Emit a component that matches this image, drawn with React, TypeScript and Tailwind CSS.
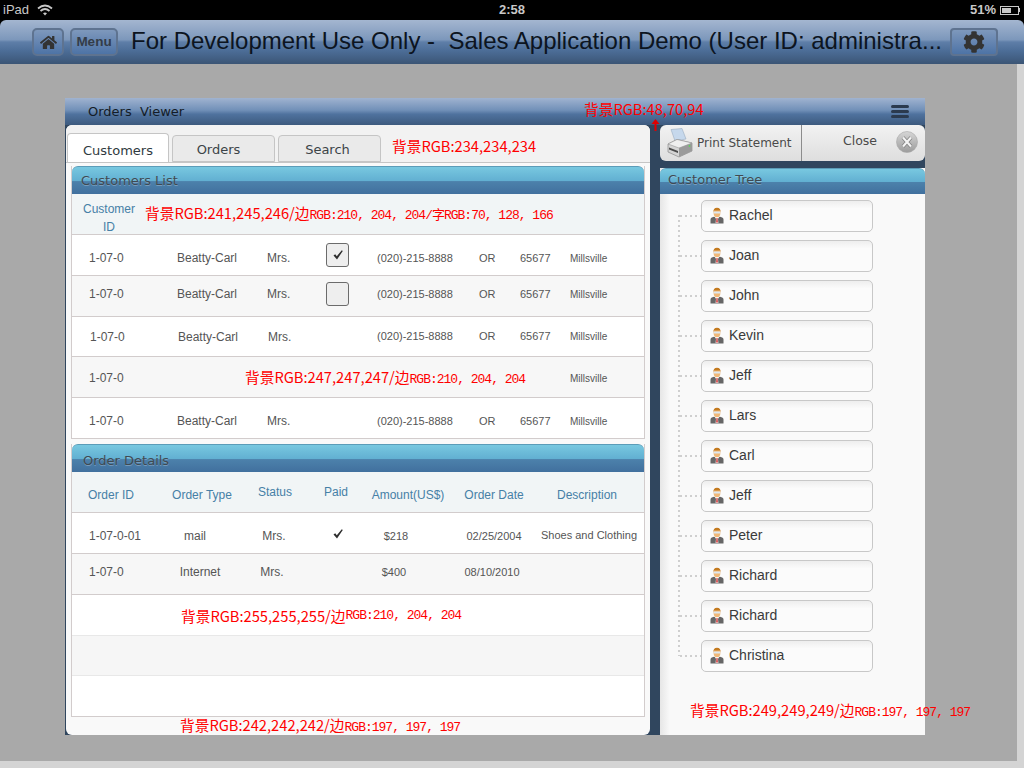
import { FC, ReactNode } from 'react';
import { FaCog, FaHome } from 'react-icons/fa';

const SANS = 'font-["Liberation_Sans",Arial,sans-serif]';
const UI = 'font-["DejaVu_Sans","Noto_Sans",sans-serif]';
const NOTE = 'font-["Noto_Sans_CJK_SC","Noto_Sans",sans-serif] text-[14.7px] leading-[18px] text-[#f00] whitespace-nowrap';
const NOTE_MONO = 'font-["Liberation_Mono","Noto_Sans_CJK_SC",monospace] text-[13px] tracking-[-1px]';

const treeNames = ['Rachel', 'Joan', 'John', 'Kevin', 'Jeff', 'Lars', 'Carl', 'Jeff', 'Peter', 'Richard', 'Richard', 'Christina'];

const customerGrid = 'grid grid-cols-[88px_90px_59px_51px_102px_41px_50px_1fr] items-center';
const customerGridNudged = 'grid grid-cols-[88px_90px_58px_51px_102px_41px_50px_1fr] items-center';
const orderGrid = 'grid grid-cols-[61px_90px_68px_60px_56px_140px_50px] items-center';
const orderHeadGrid = 'grid grid-cols-[62px_104px_42px_80px_64px_108px_78px] items-center';

const Check: FC<{ className?: string }> = ({ className }) => (
	<svg viewBox="0 0 12 12" className={className}>
		<path d="M1.5 6.6 L3.2 5.2 L4.8 7.2 L9.8 1.2 L10.8 1.9 L5 10.6 Z" fill="#2e2e2e" />
	</svg>
);

const UserIcon: FC = () => (
	<svg viewBox="0 0 14 17" className="h-[17px] w-[14px] shrink-0">
		<path d="M0.5 16.5 V12.5 Q0.5 10.5 4 9.8 L7 11 L10 9.8 Q13.5 10.5 13.5 12.5 V16.5 Z" fill="#666" />
		<path d="M5 10 H9 L8 12 L8.4 16 H5.6 L6 12 Z" fill="#fff" />
		<path d="M6.5 11 H7.5 L7.8 15.5 H6.2 Z" fill="#c81e1e" />
		<ellipse cx="7" cy="6" rx="3.4" ry="4.2" fill="#f0b878" />
		<path d="M3.4 5.5 Q3 0.8 7 0.8 Q11 0.8 10.6 5.5 L10 3.6 H4 Z" fill="#c47a1f" />
		<rect x="3.8" y="4.6" width="6.4" height="1.8" rx="0.6" fill="#dfe8ee" />
	</svg>
);

const PrinterIcon: FC = () => (
	<svg viewBox="0 0 26 30" className="h-[30px] w-[26px] shrink-0">
		<path d="M4 1.5 L15 0.5 L19 11 L8 13 Z" fill="#c6d8ec" stroke="#8fa3b8" strokeWidth="0.5" />
		<path d="M1 16 L10 11.5 L25 15 V23 L12 29 L1 24 Z" fill="#d4d4d4" stroke="#7c7c7c" strokeWidth="0.6" />
		<path d="M1 16 L12 20 L25 15 L10 11.5 Z" fill="#efefef" stroke="#8b8b8b" strokeWidth="0.5" />
		<path d="M12 20 V29 L25 23 V15 Z" fill="#9a9a9a" />
		<path d="M2 19.5 L11 23 V25 L2 21.5 Z" fill="#4b4b4b" />
		<circle cx="22.5" cy="18" r="0.9" fill="#5fd35f" />
	</svg>
);

const CloseIcon: FC = () => (
	<svg viewBox="0 0 22 22" className="ml-[19px] mb-[3px] h-[22px] w-[22px]">
		<defs>
			<linearGradient id="closeFill" x1="0" y1="0" x2="0" y2="1">
				<stop offset="0" stopColor="#d6d6d6" />
				<stop offset="1" stopColor="#9c9c9c" />
			</linearGradient>
		</defs>
		<circle cx="11" cy="11" r="10.5" fill="url(#closeFill)" stroke="#a8a8a8" strokeWidth="0.6" />
		<path d="M7 6.5 L15 15.5 M15 6.5 L7 15.5" stroke="#7f7f7f" strokeWidth="3.6" />
		<path d="M7 6.5 L15 15.5 M15 6.5 L7 15.5" stroke="#f4f4f4" strokeWidth="2.2" />
	</svg>
);

const Menu: FC = () => (
	<div className="flex flex-col gap-[2px]">
		<div className="h-[3px] w-[18px] rounded-full bg-[#2b3a4e]" />
		<div className="h-[3px] w-[18px] rounded-full bg-[#2b3a4e]" />
		<div className="h-[3px] w-[18px] rounded-full bg-[#2b3a4e]" />
	</div>
);

const SectionTitle: FC<{ title: string; className: string }> = ({ title, className }) => (
	<div className={`shrink-0 rounded-t-[6px] border-t border-[#5b9cb8] bg-[linear-gradient(#78c8e0,#62b0d2_50%,#4c81ab_54%,#41709e)] text-[13px] text-[#3f4a52] [text-shadow:0_1px_0_rgba(255,255,255,0.25)] ${UI} ${className}`}>
		{title}
	</div>
);

const Tab: FC<{ label: string; active?: boolean; className?: string }> = ({ label, active, className = '' }) => (
	<div
		className={
			active
				? `flex h-[29px] w-[102px] items-center justify-center rounded-t-[4px] border border-b-0 border-[#c5c5c5] bg-white pt-[5px] text-[13px] text-[#2f3a40] ${UI}`
				: `flex h-[27px] w-[103px] items-center justify-center rounded-t-[4px] border border-[#c5c5c5] bg-[#eaeaea] pt-[3px] text-[13px] text-[#3c4448] ${UI} ${className}`
		}
	>
		{label}
	</div>
);

const CustomerRow: FC<{ box?: 'checked' | 'empty'; nudge?: boolean; h: string; alt?: boolean }> = ({ box, nudge, h, alt }) => (
	<div className={`${nudge ? customerGridNudged : customerGrid} ${h} border-b border-[#d2cccc] ${nudge ? 'pl-[18px]' : 'pl-[17px]'} ${alt ? 'bg-[#f7f7f7]' : 'bg-white'} text-[#555] ${SANS}`}>
		<span className="text-[12px]">1-07-0</span>
		<span className="text-[12px]">Beatty-Carl</span>
		<span className="text-[12px]">Mrs.</span>
		<span>
			{box && (
				<span className={`flex h-[24px] w-[23px] items-center justify-center rounded-[3px] border border-[#6b6b6b] bg-[#eeeeee] ${box === 'checked' ? '-mt-[6px]' : ''}`}>
					{box === 'checked' && <Check className="h-[12px] w-[12px]" />}
				</span>
			)}
		</span>
		<span className="text-[11px]">(020)-215-8888</span>
		<span className="text-[11px]">OR</span>
		<span className="text-[11px]">65677</span>
		<span className="text-[10px]">Millsville</span>
	</div>
);

const Center: FC<{ className?: string; children?: ReactNode }> = ({ className = '', children }) => (
	<div className={`flex justify-center whitespace-nowrap ${className}`}>{children}</div>
);

const App: FC = () => {
	return (
		<div className="flex h-[768px] w-[1024px] flex-col overflow-hidden bg-black">
			{/* status bar */}
			<div className={`grid h-[20px] shrink-0 grid-cols-3 items-center px-[3px] text-[13px] text-[#c8c8c8] ${SANS}`}>
				<div className="flex items-center gap-[8px]">
					<span>iPad</span>
					<svg viewBox="0 0 16 12" className="h-[12px] w-[16px]">
						<path d="M1 4.5 Q8 -1.5 15 4.5" stroke="#c8c8c8" strokeWidth="1.8" fill="none" />
						<path d="M3.5 7 Q8 3 12.5 7" stroke="#c8c8c8" strokeWidth="1.8" fill="none" />
						<path d="M6 9.3 Q8 7.6 10 9.3 L8 11.5 Z" fill="#c8c8c8" />
					</svg>
				</div>
				<div className="text-center font-bold">2:58</div>
				<div className="flex items-center justify-end gap-[4px] pr-[1px]">
					<span className="font-bold">51%</span>
					<div className="flex items-center">
						<div className="h-[9px] w-[19px] border border-[#c8c8c8] p-[1px]">
							<div className="h-full w-[9px] bg-[#c8c8c8]" />
						</div>
						<div className="h-[4px] w-[1px] bg-[#c8c8c8]" />
					</div>
				</div>
			</div>
			{/* app header */}
			<div className="flex h-[44px] shrink-0 items-center rounded-t-[6px] bg-[linear-gradient(#a4b6d0,#7c97bb_45%,#5e7ea8_50%,#4c6d97_70%,#3b5575)] pl-[32px]">
				<button className="flex h-[28px] w-[32px] items-center justify-center rounded-[5px] border-2 border-[#5e7390] bg-[linear-gradient(#7e98bc,#4d73a6)]">
					<FaHome className="h-[17px] w-[17px] text-[#333]" />
				</button>
				<button className={`ml-[6px] h-[28px] w-[48px] rounded-[5px] border-2 border-[#5e7390] bg-[linear-gradient(#7e98bc,#4d73a6)] text-[13.5px] font-bold text-[#333c48] ${SANS}`}>
					Menu
				</button>
				<div className={`ml-[13px] mb-[2px] w-[819px] whitespace-pre text-[24px] leading-[30px] text-[#0c1420] ${SANS}`}>
					For Development Use Only -  Sales Application Demo (User ID: administra...
				</div>
				<button className="flex h-[28px] w-[48px] items-center justify-center rounded-[4px] border-2 border-[#5e7390] bg-[linear-gradient(#7e98bc,#4d73a6)]">
					<FaCog className="h-[22px] w-[22px] text-[#333]" />
				</button>
			</div>
			{/* page */}
			<div className="flex h-[697px] shrink-0">
				<div className="w-[1017px] bg-[#a9a9a9] pl-[65px] pt-[34px]">
					<div className="flex h-[637px] w-[860px] flex-col bg-[#30465e]">
						<div className="relative flex h-[27px] shrink-0 items-center bg-[linear-gradient(#a0b3d0,#7190b8_45%,#4f729e_60%,#3d5a7e)] pl-[23px] pr-[16px]">
							<div className={`w-[496px] whitespace-pre text-[13px] text-[#141c26] ${UI}`}>Orders  Viewer</div>
							<div className={`mb-[5px] ${NOTE}`}>背景RGB:48,70,94</div>
							<svg viewBox="0 0 9 12" className="absolute left-[586px] top-[21px] h-[12px] w-[9px]">
								<path d="M4.5 0 L8.5 5 H5.5 V12 H3.5 V5 H0.5 Z" fill="#e00000" />
							</svg>
							<div className="ml-auto">
								<Menu />
							</div>
						</div>
						<div className="flex flex-1 pl-[1px]">
							{/* left panel */}
							<div className="flex h-[610px] w-[584px] shrink-0 flex-col rounded-[6px] bg-[#f9f9f9] px-[5px]">
								<div className="-mx-[5px] flex h-[38px] shrink-0 items-end gap-[3px] rounded-t-[6px] border-b border-[#c5c5c5] bg-[#f2f2f2] px-[1px]">
									<Tab label="Customers" active />
									<Tab label="Orders" className="pr-[10px]" />
									<Tab label="Search" className="pr-[4px]" />
									<div className={`ml-[8px] self-center pt-[4px] ${NOTE}`}>背景RGB:234,234,234</div>
								</div>
								<div className="mt-[3px] flex flex-col border-x border-[#d2cccc]">
									<SectionTitle title="Customers List" className="h-[28px] pl-[9px] leading-[27px]" />
									<div className={`flex h-[41px] items-center border-b border-[#d2cccc] bg-[#f1f5f6] ${SANS}`}>
										<div className="ml-[7px] w-[60px] pt-[8px] text-center text-[12px] leading-[18px] text-[#4680a6]">Customer ID</div>
										<div className={`ml-[6px] ${NOTE}`}>
											背景RGB:241,245,246/边<span className={NOTE_MONO}>RGB:210, 204, 204/字RGB:70, 128, 166</span>
										</div>
									</div>
									<CustomerRow box="checked" h="h-[41px] pt-[6px]" />
									<CustomerRow box="empty" h="h-[41px] pb-[4px]" alt />
									<CustomerRow nudge h="h-[40px]" />
									<div className={`${customerGrid} h-[41px] border-b border-[#d2cccc] bg-[#f7f7f7] pl-[17px] pt-[2px] text-[#555] ${SANS}`}>
										<span className="text-[12px]">1-07-0</span>
										<div className={`col-span-6 pl-[68px] ${NOTE}`}>
											背景RGB:247,247,247/边<span className={NOTE_MONO}>RGB:210, 204, 204</span>
										</div>
										<span className="text-[10px]">Millsville</span>
									</div>
									<CustomerRow h="h-[41px] pt-[6px]" />
								</div>
								<div className="mt-[5px] flex flex-col border-x border-b border-[#d2cccc]">
									<SectionTitle title="Order Details" className="h-[28px] pl-[11px] leading-[31px]" />
									<div className={`${orderHeadGrid} h-[41px] border-b border-[#d2cccc] bg-[#f1f5f6] pl-[16px] pt-[6px] text-[12px] text-[#4680a6] ${SANS}`}>
										<span>Order ID</span>
										<Center>Order Type</Center>
										<Center className="mb-[7px]">Status</Center>
										<Center className="mb-[7px]">Paid</Center>
										<Center>Amount(US$)</Center>
										<Center>Order Date</Center>
										<Center>Description</Center>
									</div>
									<div className={`${orderGrid} h-[41px] border-b border-[#d2cccc] bg-white pl-[17px] pt-[6px] text-[#555] ${SANS}`}>
										<span className="text-[12px]">1-07-0-01</span>
										<Center className="text-[12px]">mail</Center>
										<Center className="text-[12px]">Mrs.</Center>
										<Center className="mb-[4px]">
											<Check className="h-[12px] w-[12px]" />
										</Center>
										<Center className="text-[11px]">$218</Center>
										<Center className="text-[11px]">02/25/2004</Center>
										<Center className="mb-[1px] text-[11px]">Shoes and Clothing</Center>
									</div>
									<div className={`${orderGrid} h-[41px] border-b border-[#d2cccc] bg-[#f7f7f7] pb-[4px] pl-[17px] text-[#555] ${SANS}`}>
										<span className="text-[12px]">1-07-0</span>
										<Center className="pl-[10px] text-[12px]">Internet</Center>
										<Center className="pr-[4px] text-[12px]">Mrs.</Center>
										<Center />
										<Center className="pr-[4px] text-[11px]">$400</Center>
										<Center className="pr-[4px] text-[11px]">08/10/2010</Center>
									</div>
									<div className={`flex h-[41px] items-center border-b border-[#e8e8e8] bg-white pl-[109px] pt-[2px] ${NOTE}`}>
										背景RGB:255,255,255/边<span className={NOTE_MONO}>RGB:210, 204, 204</span>
									</div>
									<div className="h-[40px] border-b border-[#e8e8e8] bg-[#f6f6f6]" />
									<div className="h-[40px] bg-white" />
								</div>
								<div className={`-mt-[1px] pl-[109px] ${NOTE}`}>
									背景RGB:242,242,242/边<span className={NOTE_MONO}>RGB:197, 197, 197</span>
								</div>
							</div>
							{/* right panel */}
							<div className="ml-[10px] flex min-w-0 flex-1 flex-col">
								<div className={`flex h-[36px] shrink-0 items-center rounded-[6px] bg-[linear-gradient(#f2f2f2,#dedede)] text-[12px] text-[#4a4a4a] ${UI}`}>
									<div className="flex h-full w-[142px] items-center gap-[4px] border-r border-[#8c8c8c] pl-[7px]">
										<PrinterIcon />
										<span className="whitespace-nowrap">Print Statement</span>
									</div>
									<span className="ml-[41px] mb-[3px] text-[12.5px]">Close</span>
									<CloseIcon />
								</div>
								<div className="mt-[7px] flex flex-1 flex-col bg-[linear-gradient(90deg,#e6e6e6,#f9f9f9_10px)]">
									<SectionTitle title="Customer Tree" className="h-[26px] pl-[8px] leading-[21px]" />
									<div className="relative mt-[6px] flex flex-col gap-[8px] pl-[41px]">
										<div className="absolute left-[18px] top-[15px] h-[441px] w-[2px] bg-[repeating-linear-gradient(#cfcfcf_0_2px,transparent_2px_5px)]" />
										{treeNames.map((name, index) => (
											<div key={index} className="relative flex h-[32px] w-[172px] items-center gap-[5px] rounded-[5px] border border-[#c8c8c8] bg-[linear-gradient(#eeeeee,#fbfbfb_25%)] pb-[2px] pl-[8px] text-[14px] text-[#3a3a3a]">
												<div className="absolute -left-[22px] top-[14px] h-[2px] w-[21px] bg-[repeating-linear-gradient(90deg,#cfcfcf_0_2px,transparent_2px_5px)]" />
												<UserIcon />
												<span className={SANS}>{name}</span>
											</div>
										))}
									</div>
									<div className={`mt-[29px] pl-[30px] ${NOTE}`}>
										背景RGB:249,249,249/边<span className={NOTE_MONO}>RGB:197, 197, 197</span>
									</div>
								</div>
							</div>
						</div>
					</div>
				</div>
				<div className="flex-1 bg-[#d4d4d4]" />
			</div>
			<div className="flex-1 bg-[#d4d4d4]" />
		</div>
	);
};

export default App;
